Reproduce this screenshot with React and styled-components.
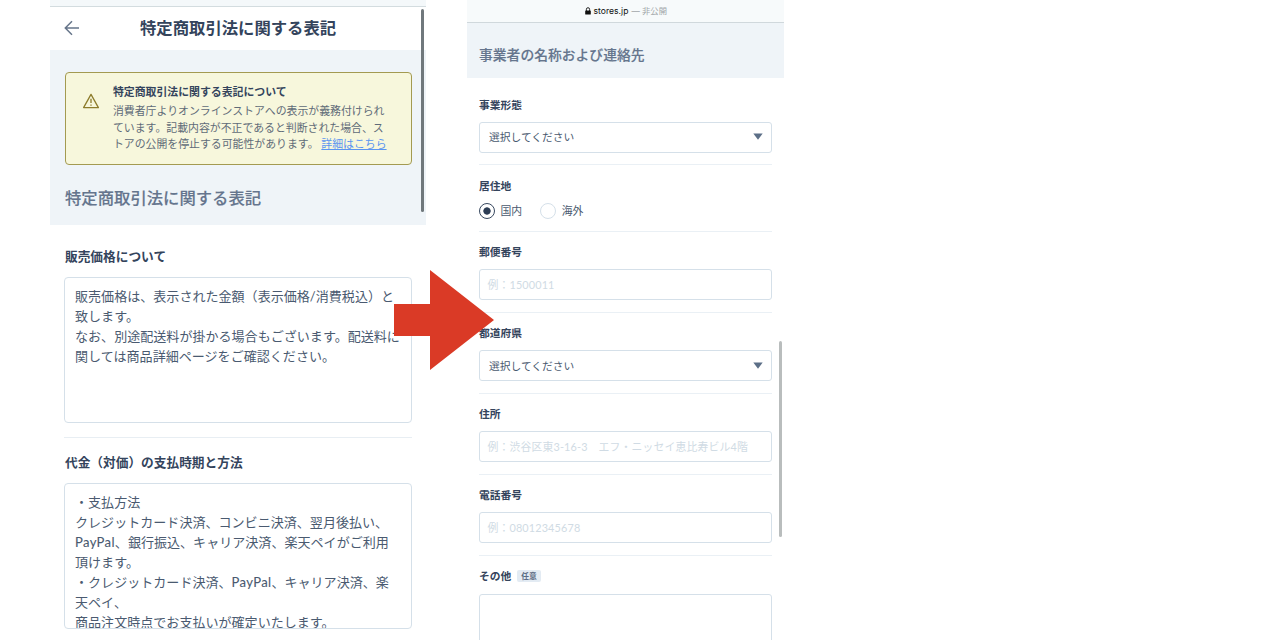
import styled, { createGlobalStyle } from "styled-components"

const notice = [
  "消費者庁よりオンラインストアへの表示が義務付けられ",
  "ています。記載内容が不正であると判断された場合、ス",
  "トアの公開を停止する可能性があります。",
]

const priceText = `販売価格は、表示された金額（表示価格/消費税込）と
致します。
なお、別途配送料が掛かる場合もございます。配送料に
関しては商品詳細ページをご確認ください。`

function App() {
  return (
    <Page>
      <GlobalStyle />
      <Legal />
      <Contact />
      <BigArrow width="102" height="102" viewBox="0 0 102 102">
        <path d="M1 35H37V1L101 51L37 101V67H1Z" fill="#da3a26" />
      </BigArrow>
    </Page>
  )
}

const Legal = () => (
  <LegalPanel>
    <Strip />
    <Header>
      <BackIcon width="16" height="16" viewBox="0 0 16 16">
        <path d="M15 8H1.5M8 1.3L1.3 8L8 14.7" />
      </BackIcon>
      <Title>特定商取引法に関する表記</Title>
    </Header>
    <Intro>
      <Alert>
        <WarnIcon width="18" height="16" viewBox="0 0 18 16">
          <path d="M9 1.4L16.4 14.6H1.6Z" />
          <path d="M9 5.8V10M9 11.4V12.8" />
        </WarnIcon>
        <div>
          <AlertTitle>特定商取引法に関する表記について</AlertTitle>
          <AlertText>
            {notice.join("\n")} <DetailLink href="#">詳細はこちら</DetailLink>
          </AlertText>
        </div>
      </Alert>
      <Heading $size={16.35}>特定商取引法に関する表記</Heading>
    </Intro>
    <LegalBody>
      <LegalLabel>販売価格について</LegalLabel>
      <TextBox>{priceText}</TextBox>
      <Rule />
      <LegalLabel>代金（対価）の支払時期と方法</LegalLabel>
      <TextBox>
        {"・支払方法\nクレジットカード決済、コンビニ決済、翌月後払い、\n"}
        <Latin>PayPal</Latin>
        {"、銀行振込、キャリア決済、楽天ペイがご利用\n頂けます。\n・クレジットカード決済、"}
        <Latin>PayPal</Latin>
        {"、キャリア決済、楽\n天ペイ、\n商品注文時点でお支払いが確定いたします。"}
      </TextBox>
    </LegalBody>
    <Scrollbar $top={9} $height={203} $right={2} $color="#70787c" />
  </LegalPanel>
)

const Contact = () => (
  <ContactPanel>
    <AddressBar>
      <svg width="6" height="8" viewBox="0 0 6 8">
        <rect x="0.2" y="3.4" width="5.6" height="4.2" rx="0.7" fill="#111" />
        <path d="M1.4 4V2.3a1.6 1.6 0 0 1 3.2 0V4" fill="none" stroke="#111" strokeWidth="0.9" />
      </svg>
      <Host>stores.jp</Host>
      <Private>— 非公開</Private>
    </AddressBar>
    <ContactHead>
      <Heading $size={13.8}>事業者の名称および連絡先</Heading>
    </ContactHead>
    <Form>
      <Field label="事業形態">
        <Select />
      </Field>
      <Field label="居住地" $height={66.5}>
        <Radios>
          <Radio $on />
          <span>国内</span>
          <Radio $second />
          <span>海外</span>
        </Radios>
      </Field>
      <Field label="郵便番号">
        <Input>例：1500011</Input>
      </Field>
      <Field label="都道府県">
        <Select />
      </Field>
      <Field label="住所">
        <Input>例：渋谷区東3-16-3　エフ・ニッセイ恵比寿ビル4階</Input>
      </Field>
      <Field label="電話番号">
        <Input>例：08012345678</Input>
      </Field>
      <Field label="その他" tag="任意" $height={110}>
        <Input $height={80} />
      </Field>
    </Form>
    <Scrollbar $top={341} $height={196} $right={1.5} $color="#b9bdbd" />
  </ContactPanel>
)

const Field = ({ label, tag, $height = 81.1, children }) => (
  <Group $height={$height}>
    <Label>
      {label}
      {tag && <Tag>{tag}</Tag>}
    </Label>
    {children}
  </Group>
)

const Select = () => (
  <SelectBox>
    <span>選択してください</span>
    <svg width="10" height="7" viewBox="0 0 10 7">
      <path d="M0.3 0.5H9.7L5 6.7Z" fill="#5c6f87" />
    </svg>
  </SelectBox>
)

const GlobalStyle = createGlobalStyle`
* { box-sizing: border-box; }
body {
  margin: 0;
  background: #fff;
  font-family: Lato, "Noto Sans CJK JP", sans-serif;
  color: #4a5a70;
}
`

const Page = styled.main`
position: relative;
display: flex;
gap: 41px;
width: 1280px;
height: 640px;
padding-left: 50px;
overflow: hidden;
`

const LegalPanel = styled.section`
position: relative;
width: 376px;
`

const ContactPanel = styled.section`
position: relative;
width: 316.5px;
`

const Strip = styled.div`
height: 7px;
background: #f4f8fa;
border-bottom: 1px solid #d3dcdf;
`

const Header = styled.header`
display: flex;
align-items: center;
height: 43px;
padding: 0 0 1px 14px;
`

const BackIcon = styled.svg`
fill: none;
stroke: #66758a;
stroke-width: 1.5;
`

const Title = styled.h1`
margin: 0 0 0 60px;
font-size: 16.35px;
line-height: 24px;
font-weight: 600;
color: #34445c;
white-space: nowrap;
`

const Intro = styled.div`
height: 175px;
padding: 22px 14px 0 15px;
background: #eff4f8;
`

const Alert = styled.div`
display: flex;
height: 93px;
margin-bottom: 21px;
padding: 10px 0 0 16px;
gap: 13px;
background: #f7f7dc;
border: 1.3px solid #a39a51;
border-radius: 4px;
`

const WarnIcon = styled.svg`
flex: none;
margin-top: 10px;
fill: none;
stroke: #8d7c2c;
stroke-width: 1.3;
stroke-linejoin: round;
`

const AlertTitle = styled.div`
font-size: 10.88px;
line-height: 18px;
font-weight: 600;
color: #34445c;
`

const AlertText = styled.div`
margin-top: 2px;
font-size: 10.88px;
line-height: 16.5px;
color: #5f6b78;
white-space: pre;
`

const DetailLink = styled.a`
color: #5b95f0;
`

const Heading = styled.h2`
margin: 0;
font-size: ${p => p.$size}px;
line-height: 24px;
font-weight: 500;
color: #65758d;
-webkit-text-stroke: 0.15px #65758d;
white-space: nowrap;
`

const LegalBody = styled.div`
padding: 21px 14px 0;
`

const LegalLabel = styled.div`
margin: 0 0 11px 1px;
font-size: 12.7px;
line-height: 20px;
font-weight: 600;
color: #34445c;
`

const TextBox = styled.div`
height: 146px;
padding: 8px 0 0 10px;
border: 1px solid #d5e0e9;
border-radius: 4px;
font-size: 13.06px;
line-height: 20px;
white-space: pre;
overflow: hidden;
`

const Latin = styled.span`
letter-spacing: 0.35px;
-webkit-text-stroke: 0.1px #4a5a70;
`

const Rule = styled.hr`
height: 1px;
margin: 14px 0;
border: 0;
background: #e8eef3;
`

const AddressBar = styled.div`
display: flex;
justify-content: center;
gap: 3px;
height: 23px;
padding: 7px 0 0 1px;
background: #f7fafb;
border-bottom: 1px solid #d0d8dc;
font: 8.6px/8px Inter, "Noto Sans CJK JP", sans-serif;
`

const Host = styled.span`
color: #111;
`

const Private = styled.span`
color: #a0a5a8;
font-size: 8.3px;
`

const ContactHead = styled.div`
height: 55px;
padding: 20px 12px 0;
background: #eff4f8;
`

const Form = styled.div`
padding: 6px 12px 0;
`

const Group = styled.div`
height: ${p => p.$height}px;
padding-top: 11px;
border-bottom: 1px solid #eaf0f5;
`

const Label = styled.div`
display: flex;
align-items: center;
height: 18px;
margin-bottom: 8.6px;
font-size: 10.75px;
font-weight: 600;
color: #34445c;
`

const Tag = styled.span`
margin-left: 6px;
padding: 0 4px;
background: #e3ebf3;
border-radius: 2px;
font-size: 7.7px;
line-height: 12px;
color: #5c6c84;
`

const Input = styled.div`
height: ${p => p.$height || 31}px;
padding-left: 7.5px;
border: 1px solid #d5e0e9;
border-radius: 3px;
font-size: 10.85px;
line-height: 29px;
letter-spacing: 0.15px;
color: #d0dbe4;
white-space: nowrap;
`

const SelectBox = styled(Input)`
display: flex;
align-items: center;
justify-content: space-between;
padding: 0 8px 1px 9px;
font-size: 10.75px;
line-height: 27.5px;
letter-spacing: 0;
color: #4a5a70;
`

const Radios = styled.div`
display: flex;
align-items: center;
height: 16px;
font-size: 10.85px;
line-height: 15px;
`

const Radio = styled.span`
width: 16px;
height: 16px;
margin: 0 5.5px 0 ${p => (p.$second ? 18 : 0)}px;
border: 1px solid ${p => (p.$on ? "#38485f" : "#d5e0e9")};
border-radius: 50%;
background: ${p => (p.$on ? "radial-gradient(circle, #2c3c54 3.3px, #fff 4px)" : "#fff")};
`

const Scrollbar = styled.div`
position: absolute;
top: ${p => p.$top}px;
right: ${p => p.$right}px;
width: 3px;
height: ${p => p.$height}px;
border-radius: 2px;
background: ${p => p.$color};
`

const BigArrow = styled.svg`
position: absolute;
left: 393px;
top: 269px;
`

export default App
